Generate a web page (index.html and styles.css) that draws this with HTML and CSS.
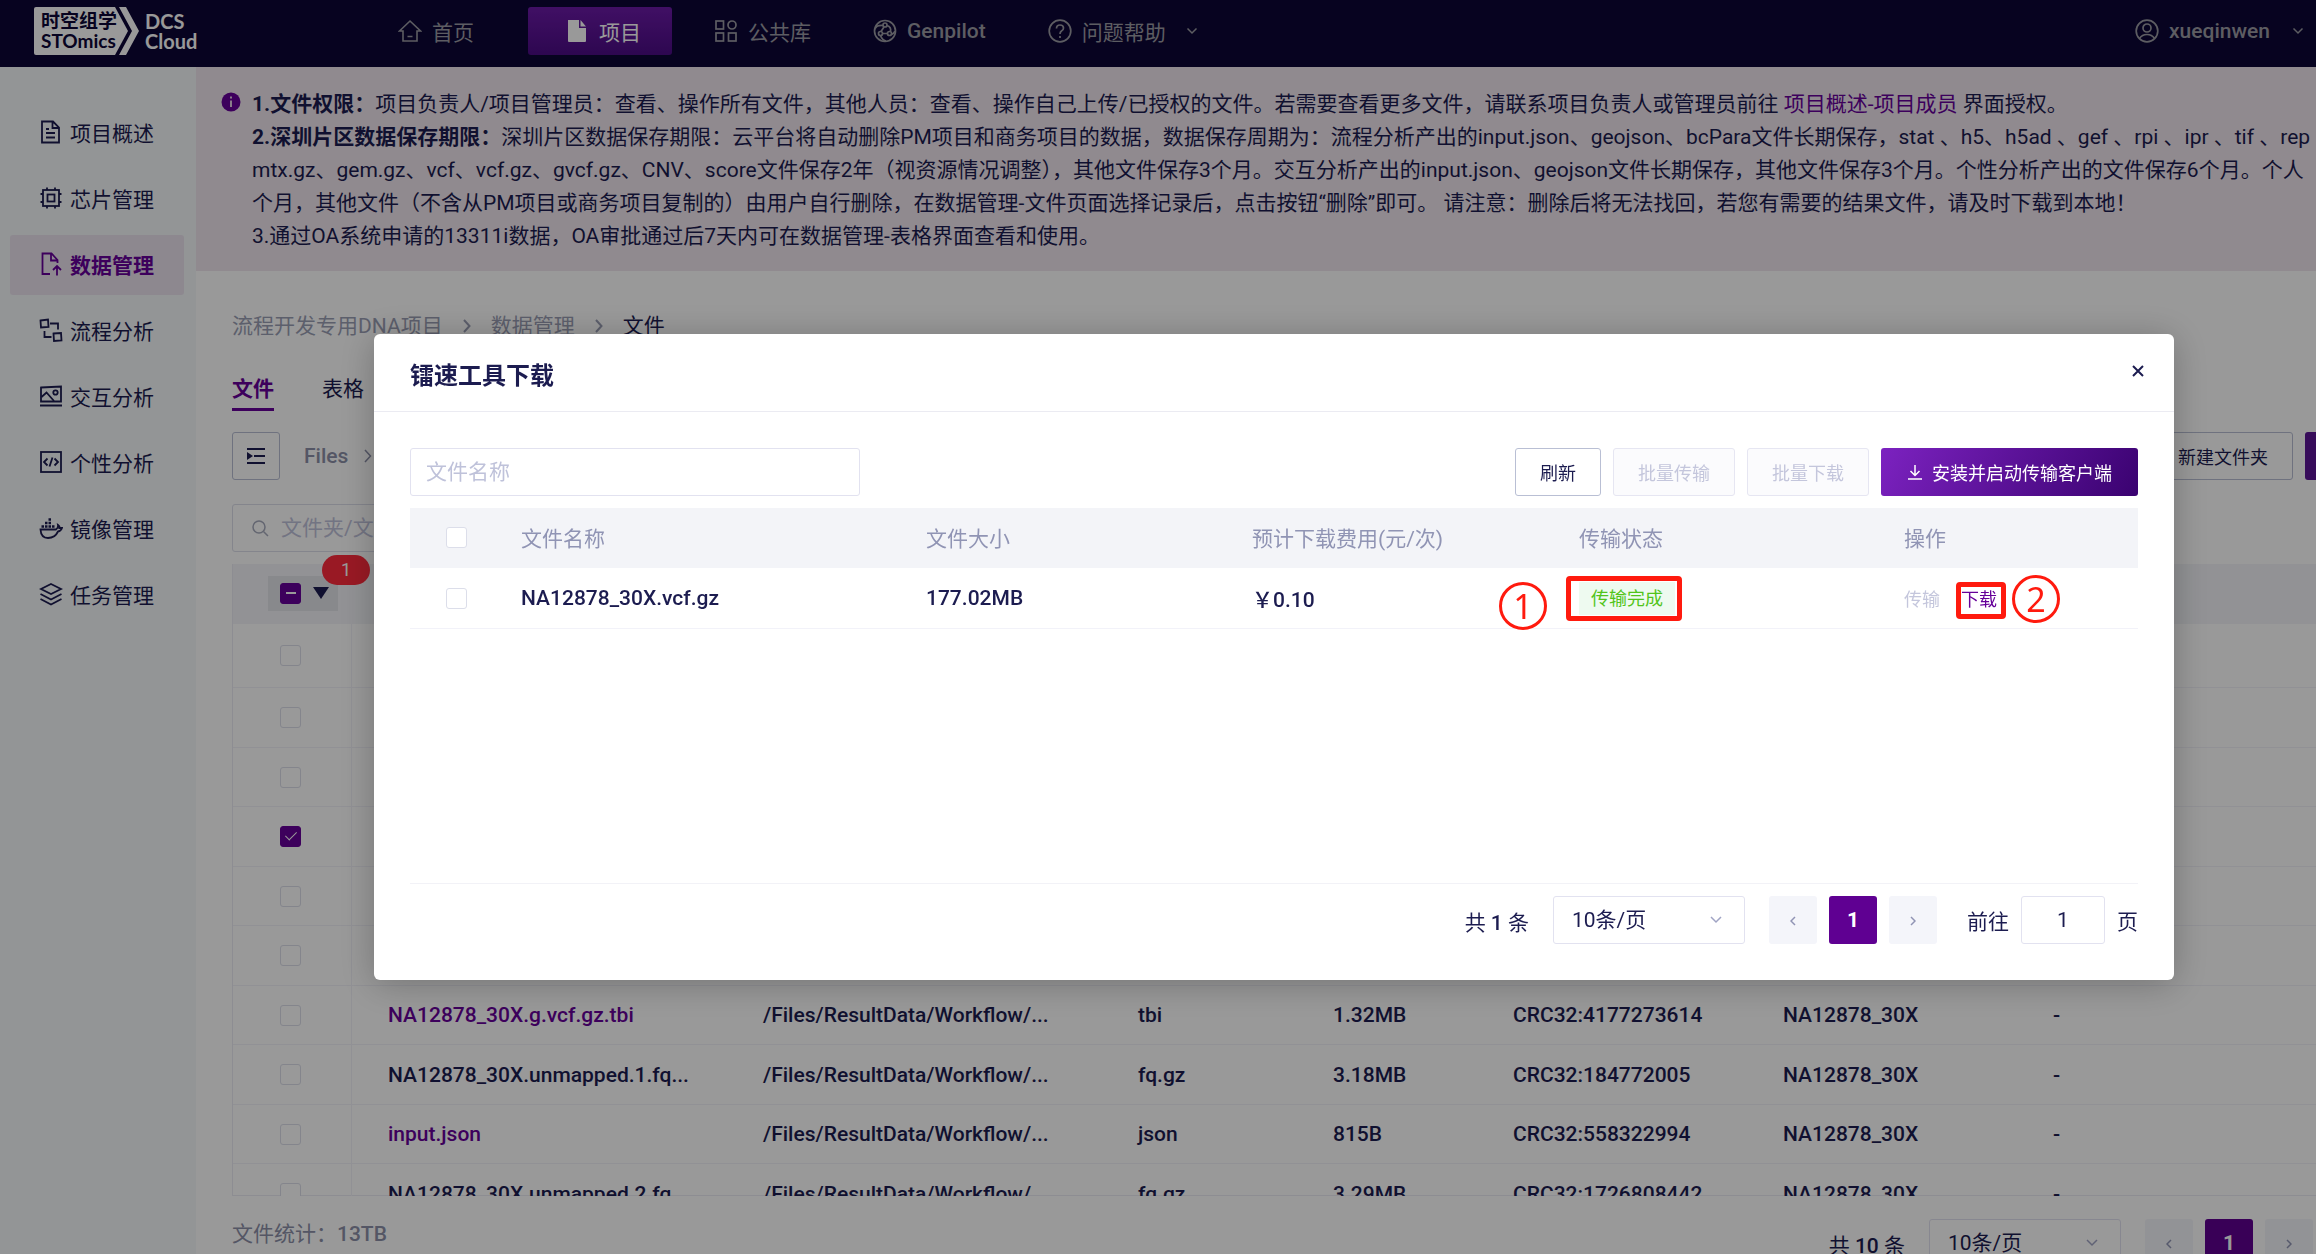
FILE: index.html
```html
<!DOCTYPE html>
<html lang="zh-CN">
<head>
  <meta charset="UTF-8">
  <meta name="viewport" content="width=device-width, initial-scale=1.0">
  <title>数据管理 - DCS Cloud</title>
  <link rel="stylesheet" href="styles.css">
</head>
<body>
<header class="topbar">
  <a class="logo" href="#">
    <svg class="logo-bg" width="106" height="48" viewBox="0 0 106 48" aria-hidden="true">
      <path d="M2 0H81L94 24L81 48H2Q0 48 0 46V2Q0 0 2 0Z" fill="#fff"/>
      <path d="M85 0H92L105 24L92 48H85L98 24Z" fill="#fff"/>
    </svg>
    <span class="logo-mark">时空组学<br>STOmics</span>
    <span class="logo-name">DCS<br>Cloud</span>
  </a>
  <nav class="nav">
    <a class="nav-item" href="#">
      <svg width="24" height="24" viewBox="0 0 24 24" fill="none" stroke="currentColor" stroke-width="1.6"><path d="M1.5 12L12 2L22.500 12H19V22H5V12ZM9.500 17.500H14.500"/></svg>
      首页
    </a>
    <a class="nav-item active" href="#">
      <svg width="24" height="24" viewBox="0 0 24 24" fill="currentColor"><path d="M3 1H14V9H21V22Q21 23 20 23H4Q3 23 3 22ZM15.500 1L21 7.500H15.500Z"/></svg>
      项目
    </a>
    <a class="nav-item" href="#">
      <svg width="24" height="24" viewBox="0 0 24 24" fill="none" stroke="currentColor" stroke-width="1.700"><rect x="2" y="2" width="7.500" height="8"/><circle cx="18" cy="6" r="4"/><rect x="2" y="14" width="7.500" height="8"/><rect x="14.500" y="14" width="7.500" height="8"/></svg>
      公共库
    </a>
    <a class="nav-item latin" href="#">
      <svg width="24" height="24" viewBox="0 0 24 24" fill="none" stroke="currentColor" stroke-width="1.700"><circle cx="12" cy="12" r="10.500"/><circle cx="12" cy="6" r="2"/><circle cx="7.500" cy="14.500" r="2"/><circle cx="16.500" cy="14.500" r="2"/><path d="M10 6.500Q4 6 2.500 9M14 6.500Q18.500 8 17.500 12.500M11 8L8 12.500M9.500 14.500H14.500M7.500 16.500Q9 21 13 22M18.500 15.500Q21 14.500 22 12"/></svg>
      Genpilot
    </a>
    <a class="nav-item" href="#">
      <svg width="24" height="24" viewBox="0 0 24 24" fill="none" stroke="currentColor" stroke-width="1.700"><circle cx="12" cy="12" r="10.800"/><path d="M8.500 9.500Q8.500 6 12 6Q15.500 6 15.500 9Q15.500 11 13.500 12Q12 13 12 15M12 17V19"/></svg>
      问题帮助
      <svg class="arrow" width="12" height="12" viewBox="0 0 12 12" fill="none" stroke="currentColor" stroke-width="1.500"><path d="M1.500 3.500L6 8L10.500 3.500"/></svg>
    </a>
  </nav>
  <a class="user" href="#">
    <svg width="24" height="24" viewBox="0 0 24 24" fill="none" stroke="currentColor" stroke-width="1.700"><circle cx="12" cy="12" r="10.800"/><circle cx="12" cy="9" r="4"/><path d="M4.500 19.500Q7 15.500 12 15.500Q17 15.500 19.500 19.500"/></svg>
    xueqinwen
    <svg class="arrow" width="12" height="12" viewBox="0 0 12 12" fill="none" stroke="currentColor" stroke-width="1.500"><path d="M1.500 3.500L6 8L10.500 3.500"/></svg>
  </a>
</header>

<div class="layout">
  <aside class="sidebar">
    <a class="side-item" href="#">
      <svg width="24" height="24" viewBox="0 0 24 24" fill="none" stroke="currentColor" stroke-width="1.800"><path d="M3 1.500H14L20 7.500V22.500H3ZM13.500 2V8H20M7 9H10M7 13H16M7 17.500H16"/></svg>
      项目概述
    </a>
    <a class="side-item" href="#">
      <svg width="24" height="24" viewBox="0 0 24 24" fill="none" stroke="currentColor" stroke-width="1.800"><rect x="4" y="4" width="16" height="16"/><rect x="8.500" y="8.500" width="7" height="7"/><path d="M8 1.500V4M16 1.500V4M8 20V22.500M16 20V22.500M1.500 8H4M1.500 16H4M20 8H22.500M20 16H22.500"/></svg>
      芯片管理
    </a>
    <a class="side-item active" href="#">
      <svg width="24" height="24" viewBox="0 0 24 24" fill="none" stroke="currentColor" stroke-width="1.800"><path d="M11 22H3.500V1.500H12.500L18.500 8V11M12 2V8.500H18.500M18 23.500V14.500M14 18L18 14L22 18"/></svg>
      数据管理
    </a>
    <a class="side-item" href="#">
      <svg width="24" height="24" viewBox="0 0 24 24" fill="none" stroke="currentColor" stroke-width="1.800"><path d="M1.500 2.500L9 1.500L9.500 9L2 9.500ZM14.500 15.500L22 15L22.500 22.500L15 23ZM11 5.500H19V11.500M5.500 13V19H12.500"/></svg>
      流程分析
    </a>
    <a class="side-item" href="#">
      <svg width="24" height="24" viewBox="0 0 24 24" fill="none" stroke="currentColor" stroke-width="1.800"><path d="M2 3.500L22 2.500V17.500H2Z"/><circle cx="16.500" cy="8.500" r="2.200"/><path d="M2.500 13L7.500 8.500L15 17M1 21.500H23"/></svg>
      交互分析
    </a>
    <a class="side-item" href="#">
      <svg width="24" height="24" viewBox="0 0 24 24" fill="none" stroke="currentColor" stroke-width="1.800"><rect x="2" y="2" width="20" height="20"/><path d="M8.500 8.500L5 12L8.500 15.500M15.500 8.500L19 12L15.500 15.500M13.500 7.500L10.500 16.500"/></svg>
      个性分析
    </a>
    <a class="side-item" href="#">
      <svg width="24" height="24" viewBox="0 0 24 24" fill="none" stroke="currentColor" stroke-width="1.800"><path d="M1.500 13.500H17Q19.500 12 19 9Q21 10.500 20.500 12H23Q22 15 19 15.500Q16 22 9 22Q2 22 1.500 13.500Z"/><path d="M2.500 10.500H5M6 10.500H8.500M9.500 10.500H12M13 10.500H15.500M6 7H8.500M9.500 7H12M9.500 3.500H12" stroke-width="2.600"/></svg>
      镜像管理
    </a>
    <a class="side-item" href="#">
      <svg width="24" height="24" viewBox="0 0 24 24" fill="none" stroke="currentColor" stroke-width="1.800"><path d="M12 2L22 7L12 12L2 7ZM1.500 12L12 17.500L22.500 12M1.500 17L12 22.500L22.500 17"/></svg>
      任务管理
    </a>
  </aside>

  <main class="main">
    <section class="notice">
      <svg class="info" width="20" height="20" viewBox="0 0 20 20"><circle cx="10" cy="10" r="9.500" fill="#660099"/><path d="M10 4.500V6.500M10 8.500V15" stroke="#f2e6f0" stroke-width="1.800"/></svg>
      <p>
        <b>1.文件权限：</b>项目负责人/项目管理员：查看、操作所有文件，其他人员：查看、操作自己上传/已授权的文件。若需要查看更多文件，请联系项目负责人或管理员前往 <a href="#">项目概述-项目成员</a> 界面授权。<br>
        <b>2.深圳片区数据保存期限：</b>深圳片区数据保存期限：云平台将自动删除PM项目和商务项目的数据，数据保存周期为：流程分析产出的input.json、geojson、bcPara文件长期保存，stat 、h5、h5ad 、gef 、rpi 、ipr 、tif 、rep<br>
        mtx.gz、gem.gz、vcf、vcf.gz、gvcf.gz、CNV、score文件保存2年（视资源情况调整），其他文件保存3个月。交互分析产出的input.json、geojson文件长期保存，其他文件保存3个月。个性分析产出的文件保存6个月。个人<br>
        个月，其他文件（不含从PM项目或商务项目复制的）由用户自行删除，在数据管理-文件页面选择记录后，点击按钮“删除”即可。 请注意：删除后将无法找回，若您有需要的结果文件，请及时下载到本地！<br>
        3.通过OA系统申请的13311i数据，OA审批通过后7天内可在数据管理-表格界面查看和使用。
      </p>
    </section>

    <div class="content">
      <div class="crumbs">
        <a href="#">流程开发专用DNA项目</a>
        <svg width="8" height="14" viewBox="0 0 8 14" fill="none" stroke="currentColor" stroke-width="2"><path d="M1 1L6.500 7L1 13"/></svg>
        <a href="#">数据管理</a>
        <svg width="8" height="14" viewBox="0 0 8 14" fill="none" stroke="currentColor" stroke-width="2"><path d="M1 1L6.500 7L1 13"/></svg>
        <span>文件</span>
      </div>
      <div class="tabs">
        <a class="tab active" href="#">文件</a>
        <a class="tab" href="#">表格</a>
      </div>
      <div class="toolbar">
        <button class="btn fold" aria-label="展开目录">
          <svg width="20" height="16" viewBox="0 0 20 16"><path d="M1 1H19M8 8H19M1 15H19" stroke="currentColor" stroke-width="1.800"/><path d="M1 4L7 8L1 12Z" fill="currentColor"/></svg>
        </button>
        <a href="#">Files</a>
        <svg width="8" height="14" viewBox="0 0 8 14" fill="none" stroke="currentColor" stroke-width="1.500"><path d="M1 1L6.500 7L1 13"/></svg>
        <button class="btn new-folder">新建文件夹</button>
        <button class="btn primary upload" aria-label="上传"></button>
      </div>
      <label class="search">
        <svg width="18" height="18" viewBox="0 0 18 18" fill="none" stroke="currentColor" stroke-width="1.500"><circle cx="8" cy="8" r="6"/><path d="M12.500 12.500L17 17"/></svg>
        <input type="text" placeholder="文件夹/文件名称" aria-label="文件夹/文件名称">
      </label>

      <div class="file-list">
        <table class="file-table">
          <colgroup><col class="f-check"><col class="f-wide"><col class="f-wide"><col class="f-type"><col class="f-size"><col class="f-crc"><col class="f-crc"><col></colgroup>
          <thead>
            <tr>
              <th>
                <div class="pick">
                  <input type="checkbox" class="check partial" aria-label="全选">
                  <svg width="16" height="12" viewBox="0 0 16 12"><path d="M0 0H16L8 12Z" fill="currentColor"/></svg>
                  <span class="badge">1</span>
                </div>
              </th>
              <th></th><th></th><th></th><th></th><th></th><th></th><th></th>
            </tr>
          </thead>
          <tbody>
            <tr><td><input type="checkbox" class="check" aria-label="选择"></td><td></td><td></td><td></td><td></td><td></td><td></td><td></td></tr>
            <tr><td><input type="checkbox" class="check" aria-label="选择"></td><td></td><td></td><td></td><td></td><td></td><td></td><td></td></tr>
            <tr><td><input type="checkbox" class="check" aria-label="选择"></td><td></td><td></td><td></td><td></td><td></td><td></td><td></td></tr>
            <tr><td><input type="checkbox" class="check" aria-label="选择" checked></td><td></td><td></td><td></td><td></td><td></td><td></td><td></td></tr>
            <tr><td><input type="checkbox" class="check" aria-label="选择"></td><td></td><td></td><td></td><td></td><td></td><td></td><td></td></tr>
            <tr><td><input type="checkbox" class="check" aria-label="选择"></td><td></td><td></td><td></td><td></td><td></td><td></td><td></td></tr>
            <tr><td><input type="checkbox" class="check" aria-label="选择"></td><td><a href="#">NA12878_30X.g.vcf.gz.tbi</a></td><td>/Files/ResultData/Workflow/...</td><td>tbi</td><td>1.32MB</td><td>CRC32:4177273614</td><td>NA12878_30X</td><td>-</td></tr>
            <tr><td><input type="checkbox" class="check" aria-label="选择"></td><td>NA12878_30X.unmapped.1.fq...</td><td>/Files/ResultData/Workflow/...</td><td>fq.gz</td><td>3.18MB</td><td>CRC32:184772005</td><td>NA12878_30X</td><td>-</td></tr>
            <tr><td><input type="checkbox" class="check" aria-label="选择"></td><td><a href="#">input.json</a></td><td>/Files/ResultData/Workflow/...</td><td>json</td><td>815B</td><td>CRC32:558322994</td><td>NA12878_30X</td><td>-</td></tr>
            <tr><td><input type="checkbox" class="check" aria-label="选择"></td><td>NA12878_30X.unmapped.2.fq...</td><td>/Files/ResultData/Workflow/...</td><td>fq.gz</td><td>3.29MB</td><td>CRC32:1726808442</td><td>NA12878_30X</td><td>-</td></tr>
          </tbody>
        </table>
      </div>

      <div class="list-foot">
        <span class="total">文件统计：<span class="latin">13TB</span></span>
        <div class="pager">
          <span class="count">共 <span class="latin">10</span> 条</span>
          <select aria-label="每页条数"><option>10条/页</option></select>
          <button class="page" aria-label="上一页"><svg width="6" height="10" viewBox="0 0 6 10"><path d="M5 1L1 5L5 9"/></svg></button>
          <button class="page current">1</button>
          <button class="page" aria-label="下一页"><svg width="6" height="10" viewBox="0 0 6 10"><path d="M1 1L5 5L1 9"/></svg></button>
        </div>
      </div>
    </div>
  </main>
</div>

<div class="overlay">
  <div class="dialog" role="dialog" aria-labelledby="dialog-title">
    <div class="dialog-head">
      <h2 id="dialog-title">镭速工具下载</h2>
      <button class="close" aria-label="关闭"><svg width="12" height="12" viewBox="0 0 12 12"><path d="M1 1L11 11M11 1L1 11" stroke="currentColor" stroke-width="2"/></svg></button>
    </div>
    <div class="dialog-body">
      <div class="actions">
        <input class="name-input" type="text" placeholder="文件名称" aria-label="文件名称">
        <button class="btn">刷新</button>
        <button class="btn" disabled>批量传输</button>
        <button class="btn" disabled>批量下载</button>
        <button class="btn primary">
          <svg width="16" height="16" viewBox="0 0 16 16" fill="none" stroke="currentColor" stroke-width="1.500"><path d="M8 1V11M3.500 7L8 11.500L12.500 7M1 15H15"/></svg>
          安装并启动传输客户端
        </button>
      </div>
      <div class="task-list">
        <table class="task-table">
          <colgroup><col class="t-check"><col class="t-name"><col class="t-size"><col class="t-fee"><col class="t-state"><col></colgroup>
          <thead>
            <tr><th><input type="checkbox" class="check" aria-label="全选"></th><th>文件名称</th><th>文件大小</th><th>预计下载费用(元/次)</th><th>传输状态</th><th>操作</th></tr>
          </thead>
          <tbody>
            <tr>
              <td><input type="checkbox" class="check" aria-label="选择"></td>
              <td>NA12878_30X.vcf.gz</td>
              <td>177.02MB</td>
              <td>￥0.10</td>
              <td><span class="tag">传输完成<span class="mark mark-state"></span><span class="step step-one">1</span></span></td>
              <td><div class="ops"><button class="link" disabled>传输</button><button class="link">下载<span class="mark mark-load"></span><span class="step step-two">2</span></button></div></td>
            </tr>
          </tbody>
        </table>
      </div>
      <div class="pager">
        <span class="count">共 <span class="latin">1</span> 条</span>
        <select aria-label="每页条数"><option>10条/页</option></select>
        <button class="page" aria-label="上一页"><svg width="6" height="10" viewBox="0 0 6 10"><path d="M5 1L1 5L5 9"/></svg></button>
        <button class="page current">1</button>
        <button class="page" aria-label="下一页"><svg width="6" height="10" viewBox="0 0 6 10"><path d="M1 1L5 5L1 9"/></svg></button>
        <label class="jump">前往 <input type="text" value="1"> 页</label>
      </div>
    </div>
  </div>
</div>
</body>
</html>
```
FILE: styles.css
```css
* {
  box-sizing: border-box;
}
body {
  margin: 0;
  height: 100vh;
  overflow: hidden;
  display: flex;
  flex-direction: column;
  font-family: Roboto, "Noto Sans CJK SC", sans-serif;
  font-size: 21px;
  color: #1c1c50;
  background: #fff;
}
button, input, select {
  font: inherit;
  color: inherit;
}
a {
  color: inherit;
  text-decoration: none;
}
svg {
  flex: none;
}
.latin {
  font-weight: 500;
}

/* top bar */
.topbar {
  flex: none;
  height: 67px;
  padding: 0 12px 5px 34px;
  display: flex;
  align-items: center;
  background: #0c0636;
  color: #9c9ca4;
}
.logo {
  position: relative;
  display: flex;
  align-items: center;
  gap: 22px;
  width: 344px;
  color: #fff;
  line-height: 20px;
  font-family: Lato, "Noto Sans CJK SC", sans-serif;
  font-weight: bold;
}
.logo-bg {
  position: absolute;
  left: 0;
  top: -4px;
}
.logo-mark {
  position: relative;
  width: 82px;
  padding-left: 7px;
  font-size: 19px;
  color: #0c0636;
  white-space: nowrap;
}
.logo-name {
  padding-left: 7px;
  font-size: 20px;
}
.nav {
  display: flex;
  gap: 6px;
}
.nav-item {
  height: 48px;
  padding: 0 20px;
  display: flex;
  align-items: center;
  gap: 10px;
  border-radius: 3px;
  margin-right: 16px;
}
.nav-item:first-child {
  margin-right: 28px;
}
.nav-item.active {
  padding: 0 31px 0 37px;
  background: linear-gradient(#6c1aa8, #4c0c86);
  color: #fff;
}
.arrow {
  margin-left: 10px;
}
.user {
  margin-left: auto;
  display: flex;
  align-items: center;
  gap: 10px;
  font-weight: 500;
}
.user .arrow {
  margin-left: 12px;
}

/* left menu */
.layout {
  flex: 1;
  min-height: 0;
  display: flex;
}
.sidebar {
  flex: none;
  width: 196px;
  padding: 36px 12px 0 10px;
  display: flex;
  flex-direction: column;
  gap: 6px;
  background: #f6f8fa;
}
.side-item {
  height: 60px;
  padding: 0 0 2px 29px;
  display: flex;
  align-items: center;
  gap: 7px;
  border-radius: 3px;
}
.side-item.active {
  background: #ebe3ef;
  color: #660099;
  font-weight: bold;
}

/* page */
.main {
  flex: 1;
  min-width: 0;
  display: flex;
  flex-direction: column;
}
.notice {
  flex: none;
  padding: 21px 0 18px 25px;
  display: flex;
  gap: 11px;
  overflow: hidden;
  background: #f1e7ef;
}
.notice p {
  margin: 0;
  line-height: 33px;
  white-space: nowrap;
}
.notice a {
  color: #660099;
}
.info {
  margin-top: 4px;
}
.content {
  flex: 1;
  min-height: 0;
  padding: 40px 0 0 36px;
  display: flex;
  flex-direction: column;
}
.crumbs {
  display: flex;
  align-items: center;
  gap: 20px;
  line-height: 30px;
  color: #9a9eb4;
}
.crumbs span {
  color: #1c1c50;
}
.tabs {
  display: flex;
  gap: 48px;
  margin-top: 27px;
}
.tab {
  height: 43px;
  line-height: 42px;
}
.tab.active {
  color: #660099;
  font-weight: bold;
  border-bottom: 3px solid #660099;
}
.toolbar {
  display: flex;
  align-items: center;
  gap: 16px;
  margin-top: 21px;
  color: #8c90a8;
  font-weight: 500;
}
.btn {
  height: 48px;
  padding: 0 24px;
  display: flex;
  align-items: center;
  justify-content: center;
  gap: 9px;
  border: 1px solid #b9bfd4;
  border-radius: 3px;
  background: #fff;
  color: #1c1c50;
  font-size: 18px;
  font-weight: normal;
  white-space: nowrap;
}
.btn:disabled {
  border-color: #e6e6f2;
  background: #fbfbfd;
  color: #c4c6dc;
}
.btn.primary {
  border: none;
  background: linear-gradient(120deg, #7c22c0, #3a0270);
  color: #fff;
  padding: 0 26px;
}
.fold {
  width: 48px;
  padding: 0;
  margin-right: 8px;
}
.new-folder {
  margin-left: auto;
}
.btn.upload {
  width: 11px;
  margin-left: -4px;
  padding: 0;
  border-radius: 3px 0 0 3px;
  background: #5c1496;
}
.search {
  width: 450px;
  height: 48px;
  margin-top: 24px;
  padding-left: 18px;
  flex: none;
  display: flex;
  align-items: center;
  gap: 12px;
  border: 1px solid #dcdeea;
  border-radius: 3px;
  color: #a6aabc;
}
.search input {
  flex: 1;
  min-width: 0;
  padding: 0;
  border: none;
  background: none;
}
input::placeholder {
  color: #bfc2da;
}

/* tables */
table {
  width: 100%;
  table-layout: fixed;
  border-collapse: separate;
  border-spacing: 0;
}
th, td {
  padding: 0;
  text-align: left;
  font-weight: normal;
  white-space: nowrap;
  border-bottom: 1px solid #f2f2f9;
}
th {
  height: 60px;
  padding-bottom: 2px;
  background: #f3f4f8;
  border-bottom: none;
  color: #9094b4;
}
td {
  font-weight: 500;
}
.check {
  appearance: none;
  display: block;
  width: 21px;
  height: 21px;
  margin: 0;
  border: 1px solid #dcdeea;
  border-radius: 3px;
  background: #fff;
}
.check:checked, .check.partial {
  border-color: #660099;
  background: #660099;
}
.check:checked::after {
  content: "";
  display: block;
  width: 5px;
  height: 10px;
  margin: 2px 0 0 7px;
  border: solid #fff;
  border-width: 0 1px 1px 0;
  transform: rotate(45deg);
}
.check.partial::after {
  content: "";
  display: block;
  width: 10px;
  height: 2px;
  margin: 8px 0 0 5px;
  background: #fff;
}
/* clips the last row but lets the badge stick out at the top */
.file-list {
  flex: none;
  height: 632px;
  margin-top: 12px;
  border: 1px solid #ececf4;
  border-width: 0 0 1px 1px;
  clip-path: inset(-30px 0 0 0);
}
.file-table td {
  height: 60px;
}
.file-table tr:nth-child(odd) td {
  height: 59px;
}
.file-table tr:first-child td {
  height: 64px;
}
.file-table td:first-child {
  padding-left: 47px;
  border-right: 1px solid #f2f2f9;
}
.file-table th:nth-child(n+2), .file-table td:nth-child(n+2) {
  padding-left: 36px;
}
.file-table td a {
  color: #660099;
}
.f-check { width: 119px; }
.f-wide { width: 375px; }
.f-type { width: 195px; }
.f-size { width: 180px; }
.f-crc { width: 270px; }
.pick {
  position: relative;
  width: 70px;
  height: 35px;
  margin-left: 35px;
  padding-left: 12px;
  display: flex;
  align-items: center;
  gap: 12px;
  background: #e3e5ea;
  color: #1c1c50;
}
.badge {
  position: absolute;
  left: 54px;
  top: -21px;
  width: 48px;
  height: 30px;
  border-radius: 15px;
  background: #ff2a3c;
  color: #fff;
  font-size: 18px;
  line-height: 30px;
  text-align: center;
}
.list-foot {
  flex: none;
  display: flex;
  justify-content: space-between;
  margin-top: 23px;
  padding-right: 3px;
}
.total {
  line-height: 30px;
  color: #8c90a8;
}

/* pagination */
.pager {
  display: flex;
  align-items: center;
  justify-content: flex-end;
  gap: 12px;
}
.count {
  margin-right: 12px;
  padding-top: 2px;
}
.pager select {
  appearance: none;
  width: 192px;
  height: 48px;
  margin-right: 12px;
  padding: 0 18px;
  border: 1px solid #e2e2f0;
  border-radius: 3px;
  background: #fff url("data:image/svg+xml,%3Csvg xmlns='http://www.w3.org/2000/svg' width='12' height='8'%3E%3Cpath d='M1 1L6 6L11 1' fill='none' stroke='%23a0a4c4' stroke-width='1.500'/%3E%3C/svg%3E") no-repeat right 22px center;
}
.page {
  width: 48px;
  height: 48px;
  padding: 0;
  border: none;
  border-radius: 3px;
  background: #f4f5fa;
  color: #9094b4;
}
.page path {
  fill: none;
  stroke: currentColor;
  stroke-width: 1.5;
}
.page svg {
  vertical-align: middle;
}
.page.current {
  background: #5f0092;
  color: #fff;
  font-weight: bold;
}
.jump {
  display: flex;
  align-items: center;
  gap: 12px;
  margin-left: 18px;
}
.jump input {
  width: 84px;
  height: 48px;
  border: 1px solid #e2e2f0;
  border-radius: 3px;
  text-align: center;
}

/* dialog */
.overlay {
  position: fixed;
  inset: 0;
  padding: 334px 142px 0 374px;
  background: rgba(0,0,0,0.4);
}
.dialog {
  border-radius: 6px;
  background: #fff;
  box-shadow: 0 4px 36px rgba(0,0,0,0.25);
}
.dialog-head {
  display: flex;
  justify-content: space-between;
  padding: 24px 30px 17px 36px;
  border-bottom: 1px solid #ebebf2;
}
.dialog-head h2 {
  margin: 0;
  font-size: 24px;
  line-height: 36px;
}
.close {
  height: 24px;
  padding: 0;
  border: none;
  background: none;
  line-height: 24px;
}
.dialog-body {
  padding: 36px;
}
.actions {
  display: flex;
  gap: 12px;
}
.name-input {
  width: 450px;
  height: 48px;
  margin-right: auto;
  padding: 0 15px;
  border: 1px solid #e2e2f0;
  border-radius: 3px;
}
.task-list {
  height: 376px;
  margin: 12px 0;
  border-bottom: 1px solid #f2f2f7;
}
.task-table td {
  height: 61px;
}
.task-table th:first-child, .task-table td:first-child {
  padding-left: 36px;
}
.t-check { width: 111px; }
.t-name { width: 405px; }
.t-size { width: 326px; }
.t-fee { width: 327px; }
.t-state { width: 325px; }
.tag {
  position: relative;
  display: inline-block;
  padding: 0 12px;
  background: #eefaf0;
  color: #52c41a;
  font-size: 18px;
  font-weight: normal;
  line-height: 33px;
}
.ops {
  display: flex;
  gap: 21px;
}
.link {
  position: relative;
  padding: 0;
  border: none;
  background: none;
  color: #660099;
  font-size: 18px;
  font-weight: normal;
}
.link:disabled {
  color: #c4c6dc;
}

/* numbered callouts over the row */
.mark {
  position: absolute;
  border: 5px solid #ff1a0e;
  border-radius: 4px;
}
.mark-state {
  inset: -6px -7px -6px -13px;
}
.mark-load {
  inset: -3px -9px -8px -5px;
}
.step {
  position: absolute;
  width: 48px;
  height: 48px;
  border: 3px solid #ff1a0e;
  border-radius: 50%;
  color: #ff1a0e;
  font-family: "Noto Sans", sans-serif;
  font-size: 34px;
  line-height: 43px;
  text-align: center;
}
.step-one {
  left: -80px;
  top: 0;
}
.step-two {
  left: 51px;
  top: -10px;
}
```
